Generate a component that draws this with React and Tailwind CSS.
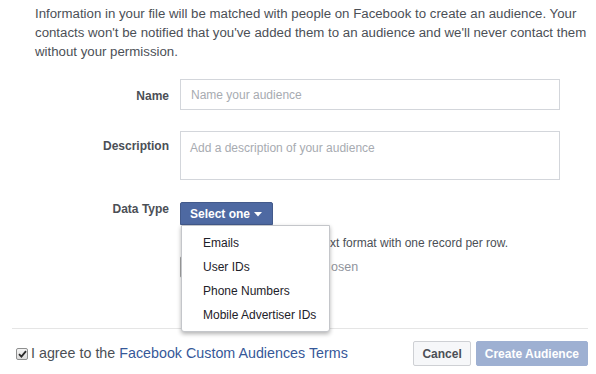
import React from "react";

export default function App() {
  return (
    <div className="relative w-[596px] h-[374px] overflow-hidden bg-white font-['Liberation_Sans',Arial,sans-serif] text-[#4b4f56]">
      <p className="pl-[35px] pt-[4px] text-[13.25px] leading-[19px] text-[#4b4f56]">
        <span className="block whitespace-nowrap">
          Information in your file will be matched with people on Facebook to create an audience. Your
        </span>
        <span className="block whitespace-nowrap">
          contacts won't be notified that you've added them to an audience and we'll never contact them
        </span>
        <span className="block whitespace-nowrap">without your permission.</span>
      </p>

      <div className="mt-[18px] grid grid-cols-[169px_380px] gap-x-[11px]">
        {/* Name */}
        <label className="pt-[9px] text-right text-[12px] leading-[16px] font-bold text-[#4b4f56]">
          Name
        </label>
        <input
          className="h-[31px] w-full border border-[#d3d6db] px-[10px] text-[12px] text-[#1d2129] outline-none placeholder:text-[#a7abb1]"
          placeholder="Name your audience"
        />

        {/* Description */}
        <label className="mt-[21px] pt-[7px] text-right text-[12px] leading-[16px] font-bold text-[#4b4f56]">
          Description
        </label>
        <textarea
          className="mt-[21px] block h-[49px] w-full resize-none border border-[#d3d6db] px-[9px] pt-[8px] text-[12px] leading-[16px] text-[#1d2129] outline-none placeholder:text-[#a7abb1]"
          placeholder="Add a description of your audience"
        />

        {/* Data Type */}
        <label className="mt-[20px] pt-[1px] text-right text-[12px] leading-[16px] font-bold text-[#4b4f56]">
          Data Type
        </label>
        <div className="relative mt-[22px]">
          <button className="flex h-[23px] items-center gap-[4px] rounded-t-[2px] border border-[#435a8b] bg-[#4e69a2] pl-[9px] pr-[10px] text-[12px] font-bold text-white">
            Select one
            <svg width="8" height="5" viewBox="0 0 8 5" className="mt-[1px]">
              <path d="M0 0 L8 0 L4 4.5 Z" fill="#ffffff" />
            </svg>
          </button>
          <div className="mt-[10px] pl-[150px] whitespace-nowrap text-[12px] leading-[16px] text-[#4b4f56]">
            xt format with one record per row.
          </div>
          <div className="mt-[5px] flex h-[22px] items-center">
            <span className="h-[22px] w-[93px] shrink-0 rounded-[2px] border border-[#a9a9a9] bg-[#efefef]" />
            <span className="ml-[58px] whitespace-nowrap text-[12.5px] text-[#90949c]">osen</span>
          </div>

          {/* Dropdown menu */}
          <div className="absolute left-[1px] top-[23px] z-10 h-[107px] w-[149px] rounded-b-[3px] border border-[#c4c6ca] bg-white pt-[5px] shadow-[0_2px_4px_rgba(0,0,0,0.3)]">
            {["Emails", "User IDs", "Phone Numbers", "Mobile Advertiser IDs"].map((t) => (
              <div
                key={t}
                className="h-[24px] whitespace-nowrap pl-[21px] text-[12px] leading-[24px] text-[#1d2129]"
              >
                {t}
              </div>
            ))}
          </div>
        </div>
      </div>

      {/* Footer */}
      <div className="ml-[12px] mr-[8px] mt-[50px] border-t border-[#e5e5e5]">
        <div className="flex items-center justify-between pl-[4px] pt-[12px]">
          <div className="flex items-center text-[14.3px] text-[#4b4f56]">
            <span className="mr-[3px] flex h-[12px] w-[12px] items-center justify-center rounded-[2px] border border-[#8e8f8f] bg-gradient-to-b from-[#f4f4f4] to-[#dcdcdc]">
              <svg width="9" height="8" viewBox="0 0 9 8">
                <path d="M1 4.2 L3.4 6.6 L8 1.2" stroke="#2b2b2b" strokeWidth="1.8" fill="none" />
              </svg>
            </span>
            <span>I agree to the&nbsp;</span>
            <span className="text-[#365899]">Facebook Custom Audiences Terms</span>
          </div>
          <div className="flex items-center gap-[5px]">
            <button className="h-[25px] rounded-[2px] border border-[#ced0d4] bg-[#f6f7f9] px-[8px] text-[12px] font-bold text-[#4b4f56]">
              Cancel
            </button>
            <button className="h-[25px] rounded-[2px] border border-[#9eb0d2] bg-[#9eb0d2] px-[8px] text-[12px] font-bold text-white">
              Create Audience
            </button>
          </div>
        </div>
      </div>
    </div>
  );
}
